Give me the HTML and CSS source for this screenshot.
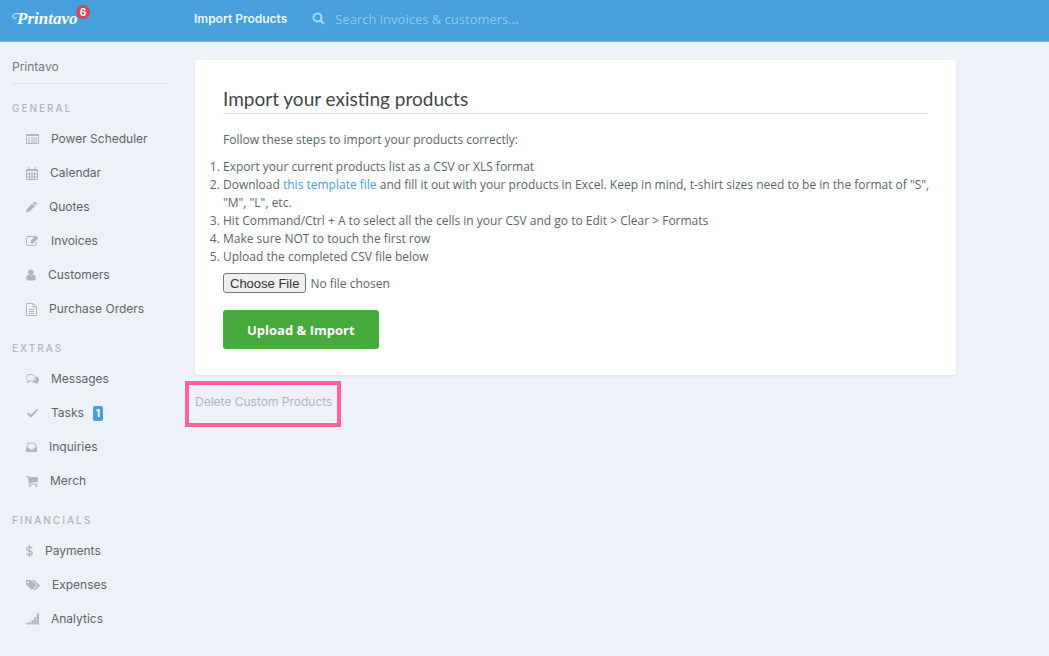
FILE: index.html
```html
<!DOCTYPE html>
<html lang="en">
<head>
    <meta charset="UTF-8">
    <meta name="viewport" content="width=device-width, initial-scale=1.0">
    <title>Import Products - Printavo</title>
    <link rel="stylesheet" href="styles.css">
</head>
<body>
    <header class="topbar">
        <a class="logo" href="#">
            <svg class="swash" width="7" height="12" viewBox="0 0 7 12"><path d="M7 1C4 0 1 1 1 3.500s3 2.500 3.500.5"/></svg>
            <span>Printavo</span>
            <span class="notice">6</span>
        </a>
        <h1>Import Products</h1>
        <form class="search">
            <label for="search" aria-label="Search">
                <svg width="13" height="13" viewBox="0 0 13 13"><circle cx="5.500" cy="5.500" r="4"/><path d="M8.500 8.500l3.500 3.500"/></svg>
            </label>
            <input type="text" id="search" placeholder="Search invoices &amp; customers...">
        </form>
    </header>

    <div class="page">
        <nav class="sidebar">
            <div class="company">Printavo</div>

            <h2>General</h2>
            <ul>
                <li><a href="#"><svg width="13" height="12" viewBox="0 0 13 12"><path class="line" d="M.5 1.500h12v9H.5zM.5 2.500h12M5 5h6M5 7h6M5 9h6M2 5h2M2 7h2M2 9h2"/></svg>Power Scheduler</a></li>
                <li><a href="#"><svg width="12" height="13" viewBox="0 0 12 13"><path class="line" d="M.5 2.500h11v10H.5zM.5 3.500h11M.5 7h11M.5 10h11M3.500 5v7.500M6 5v7.500M8.500 5v7.500M3 0v3M9 0v3"/></svg>Calendar</a></li>
                <li><a href="#"><svg width="11" height="12" viewBox="0 0 11 12"><path d="M0 11.500l.7-3.300L6.300 2.600l2.600 2.600-5.600 5.600zM7 1.900L8.200.8q.6-.5 1.200 0l1.300 1.300q.5.6 0 1.200L9.600 4.500z"/></svg>Quotes</a></li>
                <li><a href="#"><svg width="13" height="12" viewBox="0 0 13 12"><path class="line" d="M9 1.500H2Q.5 1.500.5 3v6q0 1.500 1.500 1.500h6.500Q10 10.500 10 9V7"/><path d="M4.500 8.500V6L10 .6l2.400 2.300L7 8.500z"/></svg>Invoices</a></li>
                <li><a href="#"><svg width="10" height="12" viewBox="0 0 10 12"><circle cx="5" cy="3.300" r="2.800"/><path d="M2.300 5.500q2.700 2 5.400 0Q9.800 6 9.800 9.500q0 2-1.800 2H2q-1.800 0-1.800-2Q.2 6 2.300 5.500z"/></svg>Customers</a></li>
                <li><a href="#"><svg width="11" height="13" viewBox="0 0 11 13"><path class="line" d="M.5.5h6.500l3.500 3.500v8.500H.5zM7 .5V4h3.500M3 6.500h5M3 8.500h5M3 10.500h5"/></svg>Purchase Orders</a></li>
            </ul>

            <h2>Extras</h2>
            <ul>
                <li><a href="#"><svg width="13" height="12" viewBox="0 0 13 12"><path class="line" d="M5 1.500c-6 0-6 4.500-2.700 6L1.500 9.500 4.500 8C11 8.200 11 1.500 5 1.500z"/><path d="M10.300 3.300c3.500 1.500 3.400 4.700 1.200 6l1.200 2-3.200-1.300c-1.600.2-2.900-.2-3.800-1C9 9 10.600 6.500 10.300 3.300z"/></svg>Messages</a></li>
                <li><a href="#"><svg width="13" height="12" viewBox="0 0 13 12"><path class="check" d="M1.500 6l3.300 3.300L11.500 2.600"/></svg>Tasks<span class="count">1</span></a></li>
                <li><a href="#"><svg width="11" height="12" viewBox="0 0 11 12"><path class="line" d="M2.500 2h6l2 4.500v4H.5v-4z"/><path d="M.5 6.500H3L4 8.500h3l1-2h2.500v4H.5z"/></svg>Inquiries</a></li>
                <li><a href="#"><svg width="12" height="12" viewBox="0 0 12 12"><path d="M0 1h2.700l.3 1h9v5l-8 1v.8h7.300v1H3L1.900 2H0z"/><circle cx="4" cy="10.800" r="1.100"/><circle cx="10.300" cy="10.800" r="1.100"/></svg>Merch</a></li>
            </ul>

            <h2>Financials</h2>
            <ul>
                <li><a href="#"><svg width="7" height="12" viewBox="0 0 7 12"><path class="dollar" d="M6.300 3.500Q5.500 2 3.500 2T.8 3.800Q.8 5.400 3.500 6t2.800 2.200Q6.300 10 3.500 10 1.500 10 .6 8.600M3.500 0v12"/></svg>Payments</a></li>
                <li><a href="#"><svg width="14" height="12" viewBox="0 0 14 12"><path fill-rule="evenodd" d="M0 1h4.500L10.500 6.500 6 11 0 5.500zM2.200 2.200a1 1 0 1 0 .1 0z"/><path d="M5.500 1H8l6 5.500L9.500 11 7.500 10.800l4-4.300z"/></svg>Expenses</a></li>
                <li><a href="#"><svg width="13" height="12" viewBox="0 0 13 12"><path d="M0 10h2.200v1.500H0zM2.700 9h2.200v2.500H2.700zM5.400 7h2.200v4.500H5.400zM8.100 4h2.200v7.500H8.100zM10.800.5H13v11h-2.200z"/></svg>Analytics</a></li>
            </ul>
        </nav>

        <main class="content">
            <form class="card">
                <h3>Import your existing products</h3>
                <p>Follow these steps to import your products correctly:</p>
                <ol>
                    <li>Export your current products list as a CSV or XLS format</li>
                    <li>Download <a href="#">this template file</a> and fill it out with your products in Excel. Keep in mind, t-shirt sizes need to be in the format of "S", "M", "L", etc.</li>
                    <li>Hit Command/Ctrl + A to select all the cells in your CSV and go to Edit &gt; Clear &gt; Formats</li>
                    <li>Make sure NOT to touch the first row</li>
                    <li>Upload the completed CSV file below</li>
                </ol>
                <input type="file" class="file" aria-label="CSV file">
                <button type="submit">Upload &amp; Import</button>
            </form>
            <a class="delete-link" href="#">Delete Custom Products</a>
        </main>
    </div>
</body>
</html>
```
FILE: styles.css
```css
* {
    box-sizing: border-box;
}
body {
    margin: 0;
    background: #eef2f8;
    color: #59656a;
    font-family: Inter, "Liberation Sans", sans-serif;
    font-size: 12px;
    line-height: 18px;
}
a {
    color: #459fdb;
    text-decoration: none;
}
svg {
    flex: none;
    fill: currentColor;
}

/* top bar */
.topbar {
    display: flex;
    align-items: center;
    height: 42px;
    padding: 0 12px 4px;
    background: #479fdb;
    border-bottom: 1px solid #73b6e3;
    color: #eaf7ff;
}
.logo {
    position: relative;
    display: flex;
    align-items: center;
    width: 182px;
    color: #fff;
    font-family: "Liberation Serif", serif;
    font-size: 17px;
    font-style: italic;
    font-weight: bold;
}
.swash {
    fill: none;
    stroke: #fff;
    margin-right: -2px;
}
.notice {
    position: absolute;
    top: -5px;
    left: 64px;
    width: 14px;
    height: 14px;
    border-radius: 50%;
    background: #cf4860;
    font: bold 10px/14px Inter, sans-serif;
    text-align: center;
}
.topbar h1 {
    margin: 0;
    font-size: 12px;
    font-weight: 600;
}
.search {
    display: flex;
    align-items: center;
    flex: 1;
    gap: 10px;
    margin-left: 25px;
}
.search label {
    display: flex;
    color: #a5dcfa;
}
.search svg {
    fill: none;
    stroke: currentColor;
    stroke-width: 2;
}
.search input {
    flex: 1;
    padding: 0;
    border: 0;
    outline: none;
    background: none;
    color: #fff;
    font: 13px "Open Sans", sans-serif;
}
.search input::placeholder {
    color: #8bcbf2;
}

.page {
    display: flex;
}

/* left menu */
.sidebar {
    flex: none;
    width: 168px;
    padding: 16px 0 20px 12px;
}
.company {
    margin-bottom: 2px;
    padding-bottom: 7px;
    border-bottom: 1px solid #dde2e7;
    color: #727c82;
    font-size: 12px;
}
.sidebar h2 {
    margin: 0;
    padding: 15px 0 6px;
    color: #adb7bd;
    font-size: 10px;
    font-weight: 500;
    letter-spacing: 2px;
    line-height: 15px;
    text-transform: uppercase;
}
.sidebar ul {
    margin: 0;
    padding: 0 0 0 14px;
    list-style: none;
}
.sidebar li a {
    display: flex;
    align-items: center;
    gap: 12px;
    height: 34px;
    color: #59656a;
}
.sidebar svg {
    color: #abb8be;
}
.line,
.check,
.dollar {
    fill: none;
    stroke: currentColor;
}
.check {
    stroke-width: 2;
}
.dollar {
    stroke-width: 1.3;
}
.count {
    margin-left: -3px;
    padding: 0 3px;
    border-radius: 2px;
    background: #459fdb;
    color: #fff;
    font-size: 10px;
    font-weight: bold;
    line-height: 15px;
}

/* import form */
.content {
    flex: 1;
    padding: 18px 27px;
}
.card {
    display: flex;
    flex-direction: column;
    align-items: flex-start;
    max-width: 761px;
    padding: 28px 28px 26px;
    border-radius: 3px;
    background: #fff;
    box-shadow: 0 1px 3px rgba(60, 90, 130, 0.1);
    font-family: "Open Sans", "Liberation Sans", sans-serif;
}
.card h3 {
    align-self: stretch;
    margin: 0 0 17px;
    padding-bottom: 3px;
    border-bottom: 1px solid #dfe3e6;
    color: #3f4549;
    font-family: Lato, sans-serif;
    font-size: 19px;
    font-weight: normal;
    line-height: 22px;
}
.card p {
    margin: 0 0 9px;
}
.card ol {
    margin: 0 -4px 7px 0;
    padding: 0;
}
.file {
    margin-bottom: 17px;
    color: #59656a;
    font: inherit;
}
.file::file-selector-button {
    height: 20px;
    margin-right: 4px;
    padding: 0 6px;
    border: 1px solid #767676;
    border-radius: 3px;
    background: #efefef;
    color: #333;
    font: 13px "Liberation Sans", sans-serif;
}
.card button {
    height: 39px;
    padding: 0 24px;
    border: 0;
    border-radius: 3px;
    background: #47aa3c;
    color: #fff;
    font: bold 13px "Open Sans", sans-serif;
    cursor: pointer;
}
.delete-link {
    display: inline-block;
    margin: 6px 0 0 -10px;
    padding: 8px 5px 12px 6px;
    border: 4px solid #ff6397;
    color: #adb7c3;
}
```
